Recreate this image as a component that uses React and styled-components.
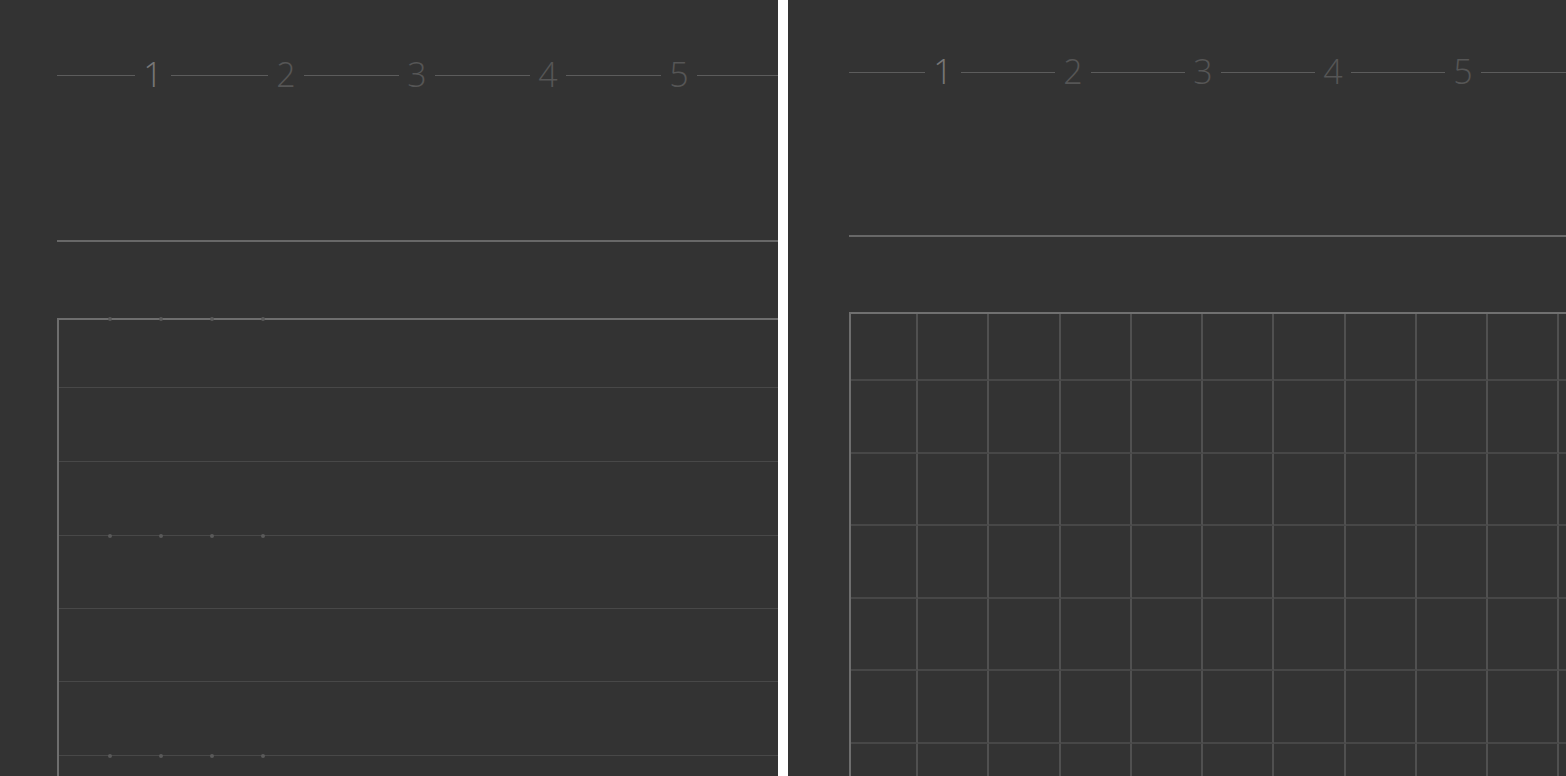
import React from "react";
import styled, { createGlobalStyle } from "styled-components";

const Global = createGlobalStyle`
  html, body { margin: 0; padding: 0; background: #ffffff; }
  body { font-family: "Open Sans", "DejaVu Sans", sans-serif; }
`;

const Page = styled.div`
  display: flex;
  gap: 10px;
  width: 1566px;
  height: 776px;
  overflow: hidden;
  background: #ffffff;
`;

const Panel = styled.section`
  flex: 0 0 778px;
  height: 776px;
  overflow: hidden;
  background: #333333;
  display: flex;
  flex-direction: column;
  padding-left: ${(p) => p.$left}px;
  box-sizing: border-box;
`;

const Ruler = styled.div`
  display: flex;
  align-items: center;
  height: 40px;
  margin-top: ${(p) => p.$top}px;
  flex-shrink: 0;
`;

const Segment = styled.div`
  height: 1px;
  background: #5c5c5c;
  flex: ${(p) => (p.$w ? `0 0 ${p.$w}px` : "1 1 auto")};
`;

const Digit = styled.span`
  flex: 0 0 36px;
  text-align: center;
  font-family: "Open Sans", "DejaVu Sans", sans-serif;
  font-weight: 300;
  font-size: 34px;
  line-height: 40px;
  color: ${(p) => (p.$active ? "#787878" : "#565656")};
  transform: translateY(-1px);
`;

const Divider = styled.div`
  height: 2px;
  background: #686868;
  margin-top: ${(p) => p.$top}px;
  flex-shrink: 0;
`;

const Sheet = styled.div`
  margin-top: ${(p) => p.$top}px;
  border-left: ${(p) => p.$border}px solid #6e6e6e;
  display: flex;
  flex-direction: column;
  flex: 1 1 auto;
  min-width: 0;
`;

const Rule = styled.div`
  height: ${(p) => p.$h}px;
  background: ${(p) => p.$color};
  display: flex;
  align-items: center;
  gap: 47px;
  padding-left: 49px;
  flex-shrink: 0;
`;

const Space = styled.div`
  height: ${(p) => p.$h}px;
  flex-shrink: 0;
`;

const Dot = styled.span`
  width: 4px;
  height: 4px;
  border-radius: 50%;
  background: #5a5a5a;
  flex-shrink: 0;
`;

const Grid = styled.div`
  display: grid;
  grid-template-columns: 67px repeat(10, 71.25px);
  grid-template-rows: 67px repeat(6, 72.6px);
`;

const Cell = styled.div`
  box-sizing: border-box;
  border-right: 2px solid #505050;
  border-bottom: 2px solid #474747;
`;

function NumberRuler({ top, first, seg, active }) {
  return (
    <Ruler $top={top}>
      <Segment $w={first} />
      {[1, 2, 3, 4, 5].map((n, i) => (
        <React.Fragment key={n}>
          <Digit $active={n === active}>{n}</Digit>
          <Segment $w={i < 4 ? seg[i] : undefined} />
        </React.Fragment>
      ))}
    </Ruler>
  );
}

const Dots = () => (
  <>
    <Dot />
    <Dot />
    <Dot />
    <Dot />
  </>
);

const leftSpaces = [67, 73, 73, 72, 72, 73, 73];

export default function App() {
  return (
    <>
      <Global />
      <Page>
        <Panel $left={57}>
          <NumberRuler top={55} first={78} seg={[97, 95, 95, 95]} active={1} />
          <Divider $top={145} />
          <Sheet $top={76} $border={2}>
            <Rule $h={2} $color="#6e6e6e">
              <Dots />
            </Rule>
            {leftSpaces.map((h, i) => (
              <React.Fragment key={i}>
                <Space $h={h} />
                <Rule $h={1} $color="#484848">
                  {i === 2 || i === 5 ? <Dots /> : null}
                </Rule>
              </React.Fragment>
            ))}
          </Sheet>
        </Panel>
        <Panel $left={61}>
          <NumberRuler top={52} first={76} seg={[94, 94, 94, 94]} active={1} />
          <Divider $top={143} />
          <Sheet $top={75} $border={2}>
            <Rule $h={2} $color="#707070" />
            <Grid>
              {Array.from({ length: 77 }).map((_, i) => (
                <Cell key={i} />
              ))}
            </Grid>
          </Sheet>
        </Panel>
      </Page>
    </>
  );
}
